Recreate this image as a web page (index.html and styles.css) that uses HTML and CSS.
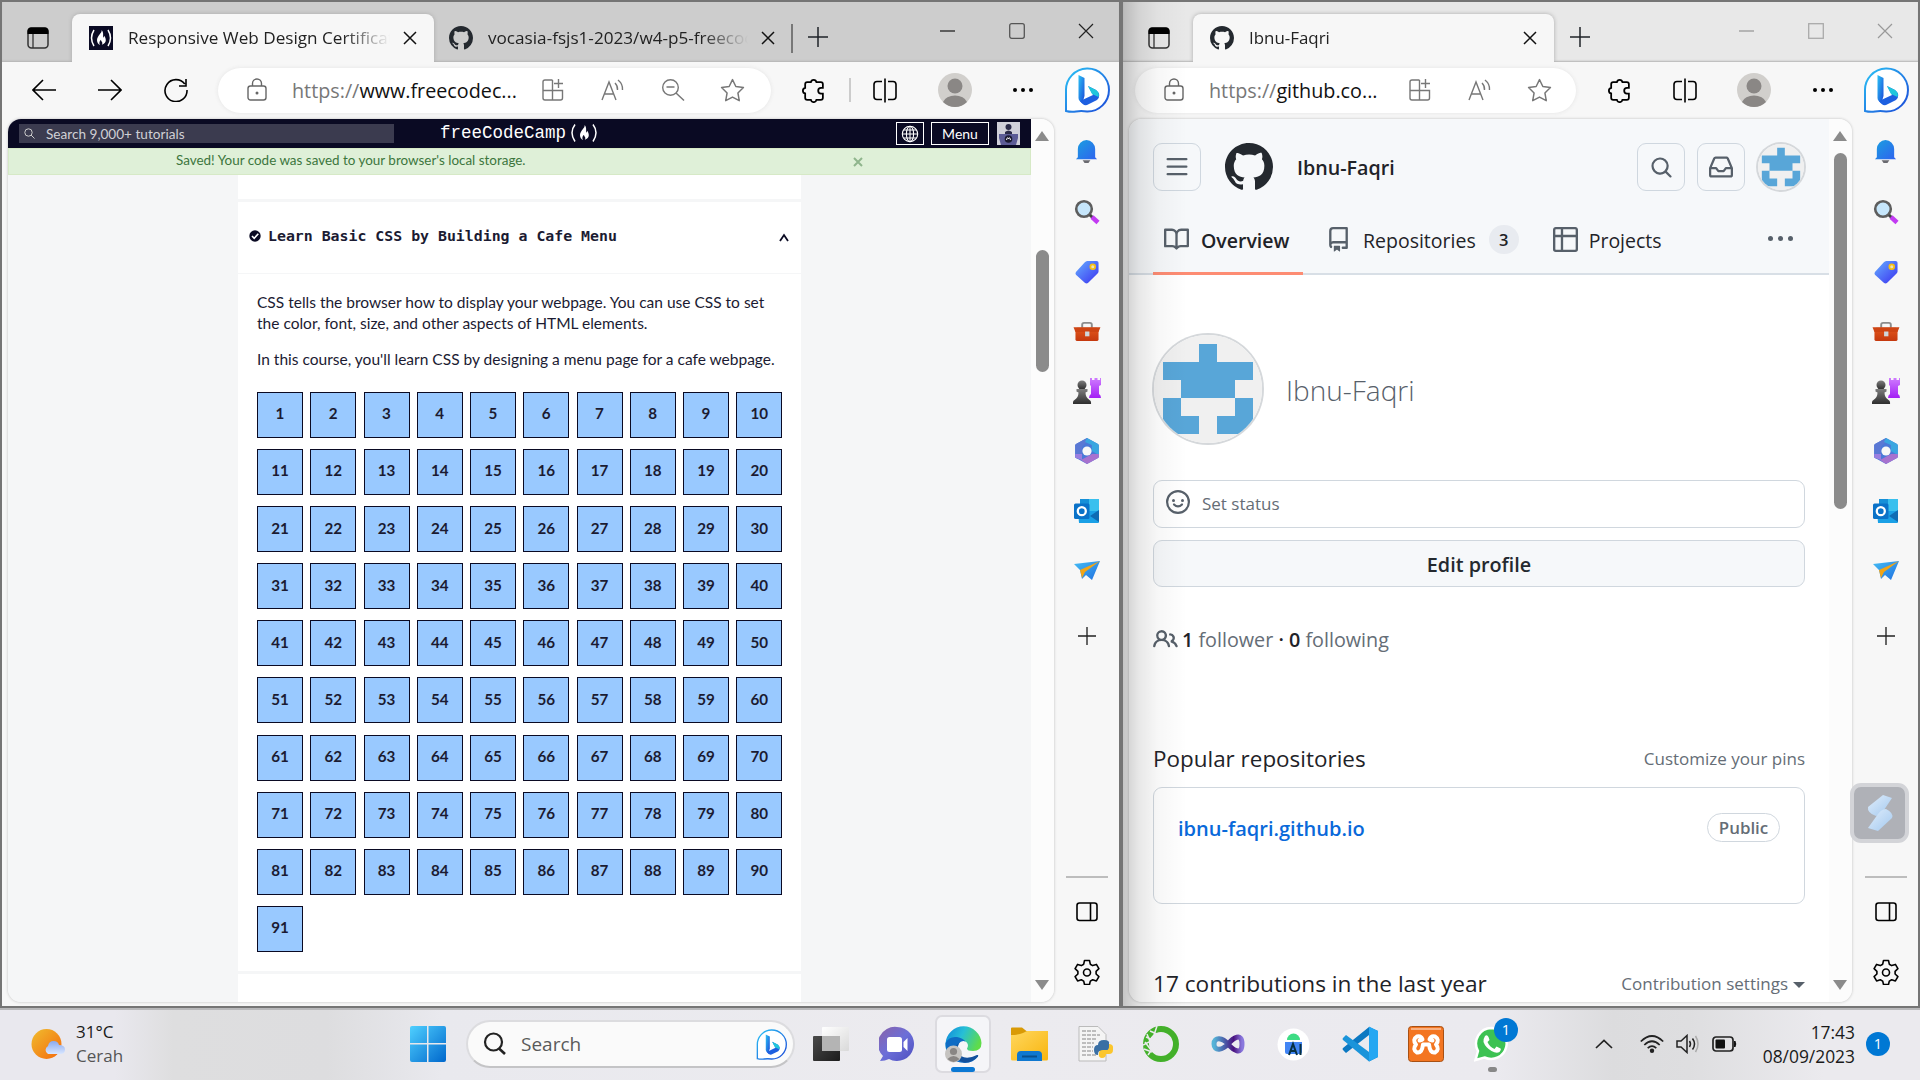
FILE: index.html
```html
<!DOCTYPE html>
<html lang="en">
<head>
<meta charset="utf-8">
<title>Desktop</title>
<link rel="stylesheet" href="styles.css">
</head>
<body>
<svg class="defs" width="0" height="0" aria-hidden="true">
<defs>
<linearGradient id="gBlue" x1="0" y1="0" x2="1" y2="1"><stop offset="0" stop-color="#2bc3f5"/><stop offset="1" stop-color="#1b48d8"/></linearGradient>
<linearGradient id="gBell" x1="0" y1="0" x2="1" y2="1"><stop offset="0" stop-color="#1aa0e0"/><stop offset="1" stop-color="#2f62ef"/></linearGradient>
<linearGradient id="gTag" x1="0" y1="0" x2="1" y2="1"><stop offset="0" stop-color="#66b0ff"/><stop offset="1" stop-color="#3a2ff0"/></linearGradient>
<linearGradient id="gWin" x1="0" y1="0" x2="1" y2="1"><stop offset="0" stop-color="#4fd0ff"/><stop offset="1" stop-color="#0067cc"/></linearGradient>
<linearGradient id="gSun" x1="0" y1="0" x2="1" y2="1"><stop offset="0" stop-color="#f0bd2e"/><stop offset="1" stop-color="#f4690d"/></linearGradient>
<linearGradient id="gCloud" x1="0" y1="0" x2="0" y2="1"><stop offset="0" stop-color="#8aaaf0"/><stop offset="1" stop-color="#d8e6ff"/></linearGradient>
<linearGradient id="gChat" x1="0" y1="0" x2="1" y2="1"><stop offset="0" stop-color="#8a62a8"/><stop offset=".5" stop-color="#6c6fd8"/><stop offset="1" stop-color="#4e4fc0"/></linearGradient>
<linearGradient id="gEdge" x1="0" y1="0" x2="1" y2=".4"><stop offset="0" stop-color="#0e86dc"/><stop offset=".5" stop-color="#27bfd6"/><stop offset="1" stop-color="#5fdc4a"/></linearGradient>
<linearGradient id="gFold" x1="0" y1="0" x2="1" y2="1"><stop offset="0" stop-color="#ffd75e"/><stop offset="1" stop-color="#f8b50e"/></linearGradient>
<linearGradient id="gVs" x1="0" y1="0" x2="1" y2="0"><stop offset="0" stop-color="#55b4d8"/><stop offset=".45" stop-color="#4b4ea0"/><stop offset=".7" stop-color="#4a1280"/><stop offset="1" stop-color="#8a78dd"/></linearGradient>
<linearGradient id="gDark" x1="0" y1="0" x2="1" y2="1"><stop offset="0" stop-color="#4a4a4a"/><stop offset="1" stop-color="#1c1c1c"/></linearGradient>
<linearGradient id="gGlass" x1="0" y1="0" x2="1" y2="1"><stop offset="0" stop-color="#ffffff"/><stop offset="1" stop-color="#d9d9d9"/></linearGradient>
<linearGradient id="gRook" x1="0" y1="0" x2="0" y2="1"><stop offset="0" stop-color="#cf7cff"/><stop offset="1" stop-color="#a320f5"/></linearGradient>
<linearGradient id="gPawn" x1="0" y1="0" x2="0" y2="1"><stop offset="0" stop-color="#7e7e7e"/><stop offset="1" stop-color="#2e2e2e"/></linearGradient>
<linearGradient id="gBox" x1="0" y1="0" x2="0" y2="1"><stop offset="0" stop-color="#e4571b"/><stop offset="1" stop-color="#c4380e"/></linearGradient>
<linearGradient id="gPlane" x1="0" y1="0" x2="1" y2="1"><stop offset="0" stop-color="#45bdf4"/><stop offset="1" stop-color="#1f6fe0"/></linearGradient>
<linearGradient id="gWidget" x1="0" y1="0" x2="1" y2="1"><stop offset="0" stop-color="#e0eefc"/><stop offset="1" stop-color="#a3c8ee"/></linearGradient>
</defs>

<symbol id="tabs" viewBox="0 0 22 22"><rect x="1" y="1" width="20" height="20" rx="3.5" fill="none" stroke="#333" stroke-width="1.5"/><path d="M.5 7V4a3.500 3.500 0 0 1 3.500-3.500h14A3.500 3.500 0 0 1 21.500 4v3z" fill="#000"/><path d="M6 7v14" stroke="#333" stroke-width="1.300"/></symbol>
<symbol id="x" viewBox="0 0 14 14"><path d="M1 1l12 12M13 1L1 13" fill="none" stroke="currentColor" stroke-width="1.500"/></symbol>
<symbol id="plus" viewBox="0 0 20 20"><path d="M10 0v20M0 10h20" stroke="currentColor" stroke-width="1.500"/></symbol>
<symbol id="back" viewBox="0 0 24 22"><path d="M24 11H1M11 1L1 11l10 10" fill="none" stroke="#000" stroke-width="1.600"/></symbol>
<symbol id="fwd" viewBox="0 0 24 22"><path d="M0 11h23M13 1l10 10-10 10" fill="none" stroke="#000" stroke-width="1.600"/></symbol>
<symbol id="reload" viewBox="0 0 24 24"><path d="M20.800 6A11 11 0 1 0 23 12M22 1v7h-7" fill="none" stroke="#000" stroke-width="1.600"/></symbol>
<symbol id="lock" viewBox="0 0 20 24"><rect x="1" y="8" width="18" height="14" rx="2.500" fill="none" stroke="#666" stroke-width="1.400"/><path d="M5.500 8V5.500a4.500 4.500 0 0 1 9 0V8" fill="none" stroke="#666" stroke-width="1.400"/><circle cx="10" cy="15" r="1.500" fill="#666"/></symbol>
<symbol id="apps" viewBox="0 0 24 24"><path d="M11.500 2H4a2 2 0 0 0-2 2v16a2 2 0 0 0 2 2h15.500a2 2 0 0 0 2-2v-7.500H2M11.500 2v20M17.500 1v9M13 5.500h9" fill="none" stroke="#777" stroke-width="1.400"/></symbol>
<symbol id="read" viewBox="0 0 24 24"><path d="M1 22L8 4l7 18M3.500 16h9M14 5q3 3 2.500 7M17 2q5 4 4.500 10" fill="none" stroke="#777" stroke-width="1.400"/></symbol>
<symbol id="zoomout" viewBox="0 0 24 24"><circle cx="9.500" cy="9.500" r="7.800" fill="none" stroke="#777" stroke-width="1.400"/><path d="M5.500 9h8M15 15l8 7.500" stroke="#777" stroke-width="1.500"/></symbol>
<symbol id="star" viewBox="0 0 24 24"><path d="M12 1.500l3.200 6.700 7.300 1-5.300 5.200 1.300 7.400L12 18.300l-6.500 3.500 1.300-7.400L1.500 9.200l7.300-1z" fill="none" stroke="#777" stroke-width="1.400" stroke-linejoin="round"/></symbol>
<symbol id="puzzle" viewBox="0 0 24 24"><path d="M6 4h3.500a2.700 2.700 0 0 1 5.300 0H19a2 2 0 0 1 2 2v3.500h-1.800a2.700 2.700 0 0 0 0 5.400H21V19a2 2 0 0 1-2 2h-4.200a2.700 2.700 0 0 1-5.300 0H6a2 2 0 0 1-2-2v-4.200a2.700 2.700 0 0 1 0-5.300V6a2 2 0 0 1 2-2z" fill="none" stroke="#000" stroke-width="1.700"/></symbol>
<symbol id="split" viewBox="0 0 24 24"><path d="M9 3H4a3 3 0 0 0-3 3v12a3 3 0 0 0 3 3h5M15 3h5a3 3 0 0 1 3 3v12a3 3 0 0 1-3 3h-5M12 0v24" fill="none" stroke="#000" stroke-width="1.600"/></symbol>
<symbol id="person" viewBox="0 0 34 34"><circle cx="17" cy="17" r="17" fill="#d1cfcc"/><circle cx="17" cy="13" r="7.500" fill="#8a8785"/><path d="M5 29a12.500 9 0 0 1 24 0a17 17 0 0 1-24 0z" fill="#8a8785"/></symbol>
<symbol id="dots" viewBox="0 0 20 4"><circle cx="2" cy="2" r="2"/><circle cx="10" cy="2" r="2"/><circle cx="18" cy="2" r="2"/></symbol>
<symbol id="bing" viewBox="0 0 46 46"><path d="M2 44V24A21.500 21.500 0 1 1 23 44.500q-6-.8-11 0T2 44z" fill="#fff" stroke="url(#gBlue)" stroke-width="2"/><path d="M14.500 8l6 3v18l-2 7q-4-2-4-5z" fill="url(#gBlue)"/><path d="M24 19l8 4q6 5 1 10l-10 5q-4 1-7-4l13-6z" fill="#1d5fe0"/><path d="M24 19l8 4q4 3 2.500 7L28 27z" fill="#20c6dc"/></symbol>
<symbol id="bell" viewBox="0 0 26 26"><path d="M4 19V10.500a9 9.500 0 0 1 18 0V19l2 2H2z" fill="url(#gBell)"/><path d="M9 22h8l-2 3h-4z" fill="#6a6a70"/></symbol>
<symbol id="lens" viewBox="0 0 26 26"><circle cx="10" cy="10" r="7.800" fill="#c6e6fb" stroke="#5e5e5e" stroke-width="2.600"/><path d="M16 16l3 3" stroke="#444" stroke-width="3"/><path d="M18 18l6 5.500" stroke="#c23bf2" stroke-width="4.500"/></symbol>
<symbol id="tag" viewBox="0 0 26 26"><path d="M13 2h10q2 0 2 2v9q0 1-1 2L14 25q-1.500 1-3 0L1.500 16.500q-1-1.500 0-3L11 3z" fill="url(#gTag)"/><circle cx="19" cy="8" r="2.500" fill="#e8e0c0" stroke="#f7bf12" stroke-width="1.800"/></symbol>
<symbol id="toolbox" viewBox="0 0 28 26"><path d="M9 9V6q0-2 2-2h6q2 0 2 2v3" fill="none" stroke="#8c8c8c" stroke-width="2"/><rect x="2" y="9" width="24" height="14" rx="2" fill="url(#gBox)"/><path d="M0 8.500h28l-2 5H2z" fill="#ce4413"/><rect x="12" y="13" width="4.500" height="5" fill="#cfd6dc"/></symbol>
<symbol id="chess" viewBox="0 0 28 28"><path d="M17 1h2v2h2.500V1h3v2H27V1h1v7l-2 1v8q2 1 2 4H16q0-3 2-4V9l-1-1z" fill="url(#gRook)"/><circle cx="9" cy="8" r="4.500" fill="url(#gPawn)"/><path d="M3.500 12h11v2.500l-2 1q0 5 4 7.500 2 1 1.500 4H0q-.5-3 1.500-4 4-2.500 4-7.500l-2-1z" fill="url(#gPawn)"/></symbol>
<symbol id="m365" viewBox="0 0 26 26"><path d="M13 0l11 6q.8.500.8 1.500v11q0 1-.8 1.500l-11 6-11-6q-.8-.5-.8-1.500v-11Q1.200 6.500 2 6z" fill="#4b78d8"/><path d="M13 0L2 6q-.8.500-.8 1.500v11q0 1 .8 1.500l6 2V9q2-3 4-4z" fill="#5a78d4"/><path d="M1.200 16v2.500q0 1 .8 1.500l6 2V16z" fill="#9a7ee0"/><path d="M13 0l11 6q.8.500.8 1.500V17l-7-4V7L11 4z" fill="#3aa6e0"/><path d="M24.800 16v2.500q0 1-.8 1.500l-11 6-6-4 11-6z" fill="#a772cf"/><circle cx="13" cy="13" r="4.600" fill="#f7f7f7"/></symbol>
<symbol id="outlook" viewBox="0 0 26 26"><rect x="6" y="1" width="19" height="13" fill="#39c0ee"/><rect x="6" y="1" width="9" height="9" fill="#1690d8"/><path d="M4 13h21v11q0 1-1 1H5z" fill="#1aa0e6"/><path d="M25 12v12l-9-6z" fill="#0f6cb4"/><rect x="0" y="5.500" width="15.500" height="15.500" rx="1.500" fill="#0a72c8"/><circle cx="7.800" cy="13.200" r="4" fill="none" stroke="#fff" stroke-width="2.300"/></symbol>
<symbol id="plane" viewBox="0 0 26 22"><path d="M0 4L26 1 18 20l-6-5-4 4-2-9z" fill="url(#gPlane)"/><path d="M26 1L6 10l2 8 3-6z" fill="#f2a516"/></symbol>
<symbol id="panel" viewBox="0 0 22 20"><rect x="1" y="1" width="20" height="17.500" rx="2.500" fill="none" stroke="#000" stroke-width="1.600"/><path d="M14.500 1v17.500" stroke="#000" stroke-width="1.600"/></symbol>
<symbol id="gear" viewBox="0 0 26 26"><path d="M10.500 1.500h5l.8 3.700 2.400 1.400 3.700-1.200 2.500 4.300-2.800 2.600v2.700l2.800 2.600-2.500 4.300-3.700-1.200-2.400 1.400-.8 3.400h-5l-.8-3.400-2.400-1.400-3.700 1.200-2.500-4.300L3.900 15v-2.700L1.100 9.700l2.500-4.300 3.700 1.200 2.400-1.400z" fill="none" stroke="#000" stroke-width="1.600" stroke-linejoin="round"/><circle cx="13" cy="13.500" r="3.500" fill="none" stroke="#000" stroke-width="1.600"/></symbol>
<symbol id="flame" viewBox="0 0 24 24"><path d="M13 0c1 4-7 9-7 15.500 0 3.500 2 6 4.500 7-2-3.500-.5-6 1.500-8 0 3 2 2.500 2 5 0 1-.3 2-.8 2.700 3.500-.7 6-3.500 6-6.700 0-3-1-5-2.500-7-.3 1.500-.8 2.500-1.700 3C15.500 7 15.500 2.500 13 0z" fill="currentColor"/></symbol>
<symbol id="globe" viewBox="0 0 18 18"><g fill="none" stroke="#fff" stroke-width="1.100"><circle cx="9" cy="9" r="7.700"/><ellipse cx="9" cy="9" rx="3.600" ry="7.700"/><path d="M1 9h16M9 1v16M2.500 5h13M2.500 13h13"/></g></symbol>
<symbol id="github" viewBox="0 0 16 16"><path d="M8 0c4.420 0 8 3.580 8 8a8.013 8.013 0 0 1-5.450 7.590c-.4.080-.55-.17-.55-.38 0-.27.010-1.130.010-2.200 0-.75-.25-1.230-.54-1.480 1.780-.2 3.650-.88 3.650-3.950 0-.88-.31-1.590-.82-2.150.080-.2.360-1.020-.080-2.120 0 0-.67-.22-2.200.82-.64-.18-1.320-.27-2-.27-.68 0-1.360.090-2 .27-1.530-1.030-2.200-.82-2.200-.82-.44 1.100-.16 1.920-.080 2.120-.51.560-.82 1.280-.82 2.150 0 3.060 1.860 3.750 3.640 3.950-.23.200-.44.550-.51 1.070-.46.210-1.610.550-2.330-.66-.15-.24-.6-.83-1.230-.82-.67.010-.27.380.010.530.340.190.730.900.820 1.130.160.450.680 1.310 2.690.940 0 .67.010 1.300.010 1.490 0 .21-.15.450-.55.380A7.995 7.995 0 0 1 0 8c0-4.420 3.580-8 8-8Z" fill="#24292f"/></symbol>
<symbol id="identicon" viewBox="0 0 420 420"><path fill="#f0f0f0" d="M0 0h420v420H0z"/><path fill="#58a6d8" d="M175 35h70v70h140v70h-70v70H105v-70H35v-70h140zM35 245h70v70h70v70H35zM315 245h70v140H245v-70h70z"/></symbol>
</svg>

<div class="desktop">
<div class="windows">

<!-- freeCodeCamp window -->
<section class="window window-left">
  <header class="tabstrip">
    <div class="cell"><svg width="22" height="22"><use href="#tabs"/></svg></div>
    <div class="tab active">
      <svg class="favicon" width="24" height="24"><rect width="24" height="24" fill="#0a0a23"/><path d="M5 4q-5 8 0 16M19 4q5 8 0 16" fill="none" stroke="#fff" stroke-width="1.500"/><use href="#flame" x="4" y="4" width="16" height="16" color="#fff"/></svg>
      <span class="tab-title">Responsive Web Design Certificat</span>
      <svg class="tab-close" width="14" height="14"><use href="#x"/></svg>
    </div>
    <div class="tab">
      <svg class="favicon" width="24" height="24"><use href="#github"/></svg>
      <span class="tab-title">vocasia-fsjs1-2023/w4-p5-freecoc</span>
      <svg class="tab-close" width="14" height="14"><use href="#x"/></svg>
    </div>
    <div class="cell newtab"><svg width="20" height="20"><use href="#plus"/></svg></div>
    <div class="caption">
      <svg width="16" height="16"><path d="M0 8h15" stroke="#222" stroke-width="1.300"/></svg>
      <svg width="16" height="16"><rect x=".7" y=".7" width="14.600" height="14.600" rx="2" fill="none" stroke="#555" stroke-width="1.300"/></svg>
      <svg width="16" height="16"><path d="M1 1l14 14M15 1L1 15" stroke="#222" stroke-width="1.200"/></svg>
    </div>
  </header>
  <div class="toolbar">
    <nav class="navkeys">
      <svg width="24" height="22"><use href="#back"/></svg>
      <svg width="24" height="22"><use href="#fwd"/></svg>
      <svg width="24" height="24"><use href="#reload"/></svg>
    </nav>
    <div class="address">
      <svg width="20" height="24"><use href="#lock"/></svg>
      <span class="url"><i>https://</i>www.freecodec...</span>
      <svg width="24" height="24"><use href="#apps"/></svg>
      <svg width="24" height="24"><use href="#read"/></svg>
      <svg width="24" height="24"><use href="#zoomout"/></svg>
      <svg width="25" height="25"><use href="#star"/></svg>
    </div>
    <div class="tools split-line">
      <svg width="25" height="25"><use href="#puzzle"/></svg>
      <svg width="24" height="25"><use href="#split"/></svg>
      <svg width="34" height="34"><use href="#person"/></svg>
      <svg width="20" height="4"><use href="#dots"/></svg>
      <svg width="46" height="46"><use href="#bing"/></svg>
    </div>
  </div>
  <div class="body">
    <div class="viewport">
      <main class="fcc">
        <div class="fcc-nav">
          <div class="fcc-search"><svg width="11" height="11" viewBox="0 0 11 11"><circle cx="4.500" cy="4.500" r="3.700" fill="none" stroke="#ccc"/><path d="M7 7l3.500 3.500" stroke="#ccc"/></svg><span>Search 9,000+ tutorials</span></div>
          <div class="fcc-logo"><span>freeCodeCamp</span><svg width="30" height="20" viewBox="0 0 30 20"><path d="M6 1.500q-6 8 0 17M24 1.500q6 8 0 17" fill="none" stroke="#fff" stroke-width="1.500"/><use href="#flame" x="6" y="2" width="18" height="16" color="#fff"/></svg></div>
          <div class="fcc-actions">
            <div class="fcc-btn lang"><svg width="18" height="18"><use href="#globe"/></svg></div>
            <div class="fcc-btn menu">Menu</div>
            <svg width="23" height="23" viewBox="0 0 23 23"><rect width="23" height="23" fill="#d0d0d9"/><circle cx="11.500" cy="5" r="3" fill="#2a2a48"/><path d="M8 10q3.500-3 7 0v3H8z" fill="#2a2a48"/><path d="M2 12h19v4l-2 7H4l-2-7z" fill="#5c5c96"/><circle cx="11.500" cy="17" r="3.800" fill="#1b1b32"/><path d="M9.500 18q1-4 2-1 1-3 2 1" fill="none" stroke="#fff"/></svg>
          </div>
        </div>
        <div class="flash"><span>Saved! Your code was saved to your browser's local storage.</span><svg width="10" height="10" viewBox="0 0 10 10"><path d="M1 1l8 8M9 1L1 9" stroke="currentColor" stroke-width="2"/></svg></div>
        <div class="column">
          <div class="prev-block"></div>
          <div class="block-head">
            <svg width="12" height="12" viewBox="0 0 12 12"><circle cx="6" cy="6" r="5.700" fill="#0a0a23"/><path d="M3 6l2.200 2.300L9.300 3.800" fill="none" stroke="#fff" stroke-width="1.600"/></svg>
            <h3>Learn Basic CSS by Building a Cafe Menu</h3>
            <svg width="10" height="9" viewBox="0 0 10 9"><path d="M1 8l4-6 4 6" fill="none" stroke="#0a0a23" stroke-width="1.800"/></svg>
          </div>
          <div class="block-body">
            <p><span>CSS tells the browser how to display your webpage. You can use CSS to set</span><br><span>the color, font, size, and other aspects of HTML elements.</span></p>
            <p><span>In this course, you'll learn CSS by designing a menu page for a cafe webpage.</span></p>
            <div class="steps">
<a>1</a><a>2</a><a>3</a><a>4</a><a>5</a><a>6</a><a>7</a><a>8</a><a>9</a><a>10</a>
<a>11</a><a>12</a><a>13</a><a>14</a><a>15</a><a>16</a><a>17</a><a>18</a><a>19</a><a>20</a>
<a>21</a><a>22</a><a>23</a><a>24</a><a>25</a><a>26</a><a>27</a><a>28</a><a>29</a><a>30</a>
<a>31</a><a>32</a><a>33</a><a>34</a><a>35</a><a>36</a><a>37</a><a>38</a><a>39</a><a>40</a>
<a>41</a><a>42</a><a>43</a><a>44</a><a>45</a><a>46</a><a>47</a><a>48</a><a>49</a><a>50</a>
<a>51</a><a>52</a><a>53</a><a>54</a><a>55</a><a>56</a><a>57</a><a>58</a><a>59</a><a>60</a>
<a>61</a><a>62</a><a>63</a><a>64</a><a>65</a><a>66</a><a>67</a><a>68</a><a>69</a><a>70</a>
<a>71</a><a>72</a><a>73</a><a>74</a><a>75</a><a>76</a><a>77</a><a>78</a><a>79</a><a>80</a>
<a>81</a><a>82</a><a>83</a><a>84</a><a>85</a><a>86</a><a>87</a><a>88</a><a>89</a><a>90</a>
<a>91</a>
            </div>
          </div>
          <div class="next-block"></div>
        </div>
      </main>
      <div class="scrollbar"><b class="up"></b><b class="thumb"></b><b class="down"></b></div>
    </div>
    <aside class="sidebar">
      <div><svg width="25" height="25"><use href="#bell"/></svg></div>
      <div><svg width="26" height="26"><use href="#lens"/></svg></div>
      <div><svg width="26" height="25"><use href="#tag"/></svg></div>
      <div><svg width="28" height="25"><use href="#toolbox"/></svg></div>
      <div><svg width="28" height="28"><use href="#chess"/></svg></div>
      <div><svg width="26" height="26"><use href="#m365"/></svg></div>
      <div><svg width="26" height="26"><use href="#outlook"/></svg></div>
      <div><svg width="26" height="22"><use href="#plane"/></svg></div>
      <div class="add"><svg width="18" height="18"><use href="#plus"/></svg></div>
      <hr>
      <div><svg width="22" height="20"><use href="#panel"/></svg></div>
      <div><svg width="26" height="26"><use href="#gear"/></svg></div>
    </aside>
  </div>
</section>

<!-- GitHub window -->
<section class="window window-right">
  <header class="tabstrip">
    <div class="cell"><svg width="22" height="22"><use href="#tabs"/></svg></div>
    <div class="tab active">
      <svg class="favicon" width="24" height="24"><use href="#github"/></svg>
      <span class="tab-title">Ibnu-Faqri</span>
      <svg class="tab-close" width="14" height="14"><use href="#x"/></svg>
    </div>
    <div class="cell newtab"><svg width="20" height="20"><use href="#plus"/></svg></div>
    <div class="caption">
      <svg width="16" height="16"><path d="M0 8h15" stroke="#999" stroke-width="1.300"/></svg>
      <svg width="16" height="16"><rect x=".7" y=".7" width="14.600" height="14.600" fill="none" stroke="#aaa" stroke-width="1.300"/></svg>
      <svg width="16" height="16"><path d="M1 1l14 14M15 1L1 15" stroke="#999" stroke-width="1.200"/></svg>
    </div>
  </header>
  <div class="toolbar">
    <div class="address">
      <svg width="20" height="24"><use href="#lock"/></svg>
      <span class="url"><i>https://</i>github.co...</span>
      <svg width="24" height="24"><use href="#apps"/></svg>
      <svg width="24" height="24"><use href="#read"/></svg>
      <svg width="25" height="25"><use href="#star"/></svg>
    </div>
    <div class="tools">
      <svg width="25" height="25"><use href="#puzzle"/></svg>
      <svg width="24" height="25"><use href="#split"/></svg>
      <svg width="34" height="34"><use href="#person"/></svg>
      <svg width="20" height="4"><use href="#dots"/></svg>
      <svg width="46" height="46"><use href="#bing"/></svg>
    </div>
  </div>
  <div class="body">
    <div class="viewport">
      <main class="gh">
        <div class="gh-header">
          <div class="gh-top">
            <div class="gh-btn"><svg width="24" height="24" viewBox="0 0 16 16"><path d="M1 2.750A.75.750 0 0 1 1.750 2h12.500a.75.750 0 0 1 0 1.500H1.750A.75.750 0 0 1 1 2.750Zm0 5A.75.750 0 0 1 1.750 7h12.500a.75.750 0 0 1 0 1.500H1.750A.75.750 0 0 1 1 7.750ZM1.750 12h12.500a.75.750 0 0 1 0 1.500H1.750a.75.750 0 0 1 0-1.500Z"/></svg></div>
            <svg class="gh-mark" width="48" height="48"><use href="#github"/></svg>
            <strong class="gh-user">Ibnu-Faqri</strong>
            <div class="gh-btn"><svg width="23" height="23" viewBox="0 0 16 16"><path d="M10.680 11.740a6 6 0 0 1-7.922-8.982 6 6 0 0 1 8.982 7.922l3.040 3.040a.749.749 0 0 1-.326 1.275.749.749 0 0 1-.734-.215ZM11.500 7a4.499 4.499 0 1 0-8.997 0A4.499 4.499 0 0 0 11.500 7Z"/></svg></div>
            <div class="gh-btn"><svg width="24" height="24" viewBox="0 0 16 16"><path d="M2.800 2.060A1.750 1.750 0 0 1 4.410 1h7.180c.7 0 1.333.417 1.610 1.060l2.740 6.395c.040.093.060.194.060.295v4.500A1.750 1.750 0 0 1 14.250 15H1.750A1.750 1.750 0 0 1 0 13.250v-4.500c0-.101.020-.202.060-.295Zm1.610.44a.25.250 0 0 0-.23.152L1.887 8H4.750a.75.750 0 0 1 .6.3L6.625 10h2.750l1.275-1.700a.75.750 0 0 1 .6-.3h2.863L11.820 2.652a.25.250 0 0 0-.23-.152Zm10.090 7h-2.875l-1.275 1.700a.75.750 0 0 1-.6.300h-3.500a.75.750 0 0 1-.6-.3L4.375 9.500H1.500v3.750c0 .138.112.250.250.250h12.500a.25.250 0 0 0 .25-.25Z"/></svg></div>
            <svg class="gh-ava" width="46" height="46"><use href="#identicon"/></svg>
          </div>
          <div class="gh-tabs">
            <div class="gh-tab on"><svg width="25" height="25" viewBox="0 0 16 16"><path d="M0 1.750A.75.750 0 0 1 .75 1h4.253c1.227 0 2.317.59 3 1.501A3.743 3.743 0 0 1 11.006 1h4.245a.75.750 0 0 1 .75.750v10.500a.75.750 0 0 1-.75.750h-4.507a2.250 2.250 0 0 0-1.591.659l-.622.621a.75.750 0 0 1-1.060 0l-.622-.621A2.250 2.250 0 0 0 5.258 13H.75a.75.750 0 0 1-.75-.75Zm7.251 10.324.004-5.073-.002-2.253A2.250 2.250 0 0 0 5.003 2.500H1.500v9h3.757a3.750 3.750 0 0 1 1.994.574ZM8.755 4.750l-.004 7.322a3.752 3.752 0 0 1 1.992-.572H14.500v-9h-3.495a2.250 2.250 0 0 0-2.250 2.250Z"/></svg><span>Overview</span></div>
            <div class="gh-tab"><svg width="25" height="25" viewBox="0 0 16 16"><path d="M2 2.500A2.500 2.500 0 0 1 4.500 0h8.750a.75.750 0 0 1 .75.750v12.500a.75.750 0 0 1-.75.750h-2.500a.75.750 0 0 1 0-1.500h1.750v-2h-8a1 1 0 0 0-.714 1.700.75.750 0 1 1-1.072 1.050A2.495 2.495 0 0 1 2 11.500Zm10.500-1h-8a1 1 0 0 0-1 1v6.708A2.486 2.486 0 0 1 4.500 9h8ZM5 12.250a.25.250 0 0 1 .25-.25h3.500a.25.250 0 0 1 .25.250v3.250a.25.250 0 0 1-.4.200l-1.450-1.087a.249.249 0 0 0-.3 0L5.400 15.700a.25.250 0 0 1-.4-.2Z"/></svg><span>Repositories</span><em>3</em></div>
            <div class="gh-tab"><svg width="25" height="25" viewBox="0 0 16 16"><path d="M0 1.750C0 .784.784 0 1.750 0h12.500C15.216 0 16 .784 16 1.750v12.500A1.750 1.750 0 0 1 14.250 16H1.750A1.750 1.750 0 0 1 0 14.250ZM6.500 6.500v8h7.750a.25.250 0 0 0 .25-.25V6.500Zm8-1.500V1.750a.25.250 0 0 0-.25-.25H6.500V5Zm-13 1.500v7.750c0 .138.112.250.250.250H5v-8ZM5 5V1.500H1.750a.25.250 0 0 0-.25.250V5Z"/></svg><span>Projects</span></div>
            <svg class="gh-more" width="25" height="5"><use href="#dots"/></svg>
          </div>
        </div>
        <div class="gh-profile">
          <div class="gh-id"><svg class="big-ava" width="108" height="108"><use href="#identicon"/></svg><h1>Ibnu-Faqri</h1></div>
          <div class="status"><svg width="24" height="24" viewBox="0 0 24 24"><circle cx="12" cy="12" r="10.900" fill="none" stroke="#57606a" stroke-width="2.200"/><circle cx="7.500" cy="10.500" r="1.500"/><circle cx="16.500" cy="10.500" r="1.500"/><path d="M8 14.500q4 4 8 0" fill="none" stroke="#57606a" stroke-width="2.200" stroke-linecap="round"/></svg><span>Set status</span></div>
          <div class="edit">Edit profile</div>
          <div class="follow"><svg width="25" height="25" viewBox="0 0 16 16"><path d="M2 5.500a3.500 3.500 0 1 1 5.898 2.549 5.508 5.508 0 0 1 3.034 4.084.75.750 0 1 1-1.482.235 4 4 0 0 0-7.900 0 .75.750 0 0 1-1.482-.236A5.507 5.507 0 0 1 3.102 8.050 3.493 3.493 0 0 1 2 5.500ZM11 4a3.001 3.001 0 0 1 2.220 5.018 5.010 5.010 0 0 1 2.560 3.012.749.749 0 0 1-.885.954.752.752 0 0 1-.549-.514 3.507 3.507 0 0 0-2.522-2.372.75.750 0 0 1-.574-.73v-.352a.75.750 0 0 1 .416-.672A1.500 1.500 0 0 0 11 5.500.750.750 0 0 1 11 4Zm-5.500-.5a2 2 0 1 0-.001 3.999A2 2 0 0 0 5.500 3.500Z"/></svg><span><b>1</b> follower <b>·</b> <b>0</b> following</span></div>
          <div class="row-head"><h2>Popular repositories</h2><small>Customize your pins</small></div>
          <div class="repo"><a>ibnu-faqri.github.io</a><span class="public">Public</span></div>
          <div class="row-head contrib"><h2>17 contributions in the last year</h2><small>Contribution settings</small><i class="caret"></i></div>
        </div>
      </main>
      <div class="scrollbar"><b class="up"></b><b class="thumb"></b><b class="down"></b></div>
    </div>
    <aside class="sidebar">
      <div><svg width="25" height="25"><use href="#bell"/></svg></div>
      <div><svg width="26" height="26"><use href="#lens"/></svg></div>
      <div><svg width="26" height="25"><use href="#tag"/></svg></div>
      <div><svg width="28" height="25"><use href="#toolbox"/></svg></div>
      <div><svg width="28" height="28"><use href="#chess"/></svg></div>
      <div><svg width="26" height="26"><use href="#m365"/></svg></div>
      <div><svg width="26" height="26"><use href="#outlook"/></svg></div>
      <div><svg width="26" height="22"><use href="#plane"/></svg></div>
      <div class="add"><svg width="18" height="18"><use href="#plus"/></svg></div>
      <hr>
      <div><svg width="22" height="20"><use href="#panel"/></svg></div>
      <div><svg width="26" height="26"><use href="#gear"/></svg></div>
    </aside>
  </div>
  <div class="edge-shadow"></div>
</section>
</div>

<footer class="taskbar">
  <div class="weather">
    <svg width="36" height="32" viewBox="0 0 36 32"><circle cx="15.500" cy="16" r="15" fill="url(#gSun)"/><path d="M17 26a4.500 4.500 0 0 1 0-8q1-5 5.500-5t5.500 4q6 0 6 4.500t-5 4.500z" fill="url(#gCloud)"/></svg>
    <div><span>31°C</span><span class="sky">Cerah</span></div>
  </div>
  <div class="apps">
    <svg class="start" width="36" height="36" viewBox="0 0 36 36"><path d="M2 0h15v17H0V2q0-2 2-2zM18.500 0H34q2 0 2 2v15H18.500zM0 18.500h17V36H2q-2 0-2-2zM18.500 18.500H36V34q0 2-2 2H18.500z" fill="url(#gWin)"/></svg>
    <div class="search">
      <svg width="24" height="24" viewBox="0 0 24 24"><circle cx="10.500" cy="10" r="8.500" fill="none" stroke="#222" stroke-width="2.200"/><path d="M16 16.500l6 5.500" stroke="#222" stroke-width="2.600"/></svg>
      <span>Search</span>
      <svg width="31" height="31"><use href="#bing"/></svg>
    </div>
    <div class="app"><svg width="36" height="36" viewBox="0 0 36 36"><rect y="10" width="27" height="25" rx="1" fill="url(#gDark)"/><rect x="9" y="1" width="27" height="24" rx="1" fill="url(#gGlass)"/><path d="M9 10h18v15H9z" fill="#b4b4b4"/></svg></div>
    <div class="app"><svg width="36" height="36" viewBox="0 0 36 36"><path d="M18 1a17 17 0 1 1-8 32q-4 2-9 2l3-5A17 17 0 0 1 18 1z" fill="url(#gChat)"/><rect x="8" y="11" width="15" height="15" rx="2.500" fill="#fff"/><path d="M24.500 16l4-4v13l-4-4z" fill="#fff"/></svg></div>
    <div class="app current"><svg width="37" height="37" viewBox="0 0 37 37"><path d="M.6 17A18 18 0 0 1 36.500 17q0 8-8.500 8-6 0-6-2.500c2-2.500 1-7.500-4-7.500q-9 0-9 11L5 30Q-.5 24 .6 17z" fill="url(#gEdge)"/><path d="M.5 17Q4 10 12 11q6 1 8.500 4.500-4-1.500-6.500 2-3 6 1 11.500 4 5 12 3 3-1 5-2.500 1.500-.5 1 1-4.500 6-13 6.500Q1 36 .5 17z" fill="#0f6cc4"/><path d="M14 17q-5 7 2 13 6 4 16-1 2-.5 1 1.500-6 6.500-14 6-12-4-9-14 1-4 4-5.500z" fill="#12509c"/><circle cx="8.500" cy="28" r="8.500" fill="#c5c3c0"/><circle cx="8.500" cy="25.500" r="3.600" fill="#898684"/><path d="M2.500 33q6-6 12 0-6 6-12 0z" fill="#898684"/></svg><i class="run"></i></div>
    <div class="app"><svg width="37" height="34" viewBox="0 0 37 34"><path d="M0 1.500Q0 .5 1 .5h10l5 4H0z M0 4h16v6H0z" fill="#d99a06"/><path d="M0 8q8 0 12-2l4-2h21v28q0 1.500-1.500 1.500h-34Q0 33.500 0 32z" fill="url(#gFold)"/><path d="M6 34v-6q0-4 4-4h17q4 0 4 4v6z" fill="#0f78d0"/><path d="M11 29.500h15" stroke="#08508f" stroke-width="2"/></svg></div>
    <div class="app"><svg width="36" height="36" viewBox="0 0 36 36"><path d="M2 .5h19l8 8V35H2z" fill="#f4f4f4" stroke="#bbb"/><path d="M5 5h14M5 9h18M5 13h14M5 17h12M5 21h11M5 25h11M5 29h14" stroke="#aaa" stroke-width="1.500" stroke-dasharray="4 1"/><path d="M21 19q0-5 6-5t5 4v4q0 3-4 3h-5q-2 0-2 4-4 0-4-5t4-5z" fill="#3a6fa4"/><path d="M32 18q5 0 4 6 0 4-4 4h-3q0 4-4 4-4-.5-3-5 0-3 4-3h4q2 0 2-4z" fill="#fbc62d"/></svg></div>
    <div class="app"><svg width="36" height="36" viewBox="0 0 36 36"><circle cx="18" cy="18" r="15" fill="none" stroke="#43b02a" stroke-width="6"/><path d="M14 0l-3 9M7 5l7 3M3 11l7 3M0 19l8-4M1 23l8 3M5 29l5-7M4 8l4 10M2 16l6 8" stroke="#ebeaee" stroke-width="1.500"/></svg></div>
    <div class="app"><svg width="34" height="22" viewBox="0 0 34 22"><path d="M17 11C12 5 3 3 3 11s9 6 14 0S31 -1 31 11s-9 6 -14 0z" fill="none" stroke="url(#gVs)" stroke-width="5"/></svg></div>
    <div class="app"><svg width="33" height="33" viewBox="0 0 33 33"><circle cx="16.500" cy="16.500" r="16" fill="#fff"/><path d="M8 14h17v10q0 2-2 2H10q-2 0-2-2z" fill="#4285f4"/><path d="M10 12a6 6 0 0 1 13 0z" fill="#3ddc84"/><path d="M12 27l4-11 4 11M13 23h6M23.500 16v11" fill="none" stroke="#073042" stroke-width="2"/></svg></div>
    <div class="app"><svg width="36" height="36" viewBox="0 0 36 36"><path d="M27 1l9 4v26l-9 4.500V9L4 27l-3-3q-1-1 0-2z" fill="#0b78c2"/><path d="M4 9L27 26v9.500L1 14q-1-1 0-2z" fill="#1a94da"/><path d="M27 .5l9 4.500v26l-9 4.500z" fill="#25a7f2"/></svg></div>
    <div class="app"><svg width="36" height="36" viewBox="0 0 36 36"><rect x=".5" y=".5" width="35" height="35" rx="3" fill="#f37521" stroke="#a85013"/><path d="M3 3h30" stroke="#f9b080" stroke-width="2"/><path d="M15 18.500h6M15 18.500q-1 9-6 8-5-3-1-8-4-5 1-8 4-1 5.500 3l-3 1M21 18.500q1 9 6 8 5-3 1-8 4-5-1-8-4-1-5.500 3l3 1" fill="none" stroke="#fff" stroke-width="4" stroke-linejoin="round" stroke-linecap="round"/></svg></div>
    <div class="app whatsapp"><svg width="36" height="36" viewBox="0 0 36 36"><path d="M17.500 2a15.500 15.500 0 1 1-7 29.500L1.500 34l2.500-9A15.500 15.500 0 0 1 17.500 2z" fill="#3dc253" stroke="#fff" stroke-width="2.500"/><path d="M11 10q2-2 3.500 1l1 3-2 2q2 5 7 7l2-2.500 4 2q1 1-1 3.500-3 2-8-1-6-3.500-8-9 0-4 1.500-6z" fill="#fff"/></svg><b class="count">1</b><i class="run idle"></i></div>
  </div>
  <div class="tray">
    <svg width="18" height="10" viewBox="0 0 18 10"><path d="M1 9l8-7.500L17 9" fill="none" stroke="#222" stroke-width="1.700"/></svg>
    <svg class="wifi" width="24" height="18" viewBox="0 0 24 18"><g fill="none" stroke="#222" stroke-width="1.700"><path d="M.8 6.500q11.200-11 22.400 0M4.300 10q7.700-7.500 15.400 0M7.700 13.200q4.300-4 8.600 0"/></g><circle cx="12" cy="15.800" r="2.200" fill="#222"/></svg>
    <svg class="vol" width="24" height="20" viewBox="0 0 24 20"><path d="M1 7h4l6-5.500v17L5 13H1z" fill="none" stroke="#222" stroke-width="1.500"/><path d="M13.500 7q2 3 0 6M16.500 4.500q4 5.500 0 11" fill="none" stroke="#222" stroke-width="1.500"/><path d="M19.500 2q5 8 0 16" fill="none" stroke="#aaa" stroke-width="1.500"/></svg>
    <svg class="bat" width="25" height="16" viewBox="0 0 25 16"><rect x="1" y="1" width="20" height="14" rx="3" fill="none" stroke="#222" stroke-width="1.700"/><rect x="3.500" y="3.500" width="9.500" height="9" rx="1" fill="#111"/><path d="M22 5h1.500q1.500 3 0 6H22z" fill="#111"/></svg>
    <div class="clock"><span>17:43</span><span>08/09/2023</span></div>
    <b class="note">1</b>
  </div>
</footer>

<div class="widget"><svg width="30" height="36" viewBox="0 0 30 36"><path d="M18 0l9 3-10 15q-3 3-6 3-9-3-8-9z" fill="url(#gWidget)"/><path d="M13 36l-10-3 10-14q4-5 8-5 8 4 6 9z" fill="url(#gWidget)"/></svg></div>
</div>
</body>
</html>
```
FILE: styles.css
```css
* { box-sizing: border-box; }
body { margin: 0; overflow: hidden; font-family: "Open Sans", "Noto Sans", sans-serif; color: #1f2328; }
svg { display: block; flex: none; }
.defs { position: absolute; }
h1, h2, h3, p { margin: 0; font-weight: 400; }
span, strong, small, h1, h2, h3, a { white-space: nowrap; }

.desktop { position: relative; width: 1920px; height: 1080px; display: flex; flex-direction: column; }
.windows { display: flex; height: 1010px; background: #757575; border-bottom: 2px solid #b8b8ba; }

/* browser windows */
.window { position: relative; display: flex; flex-direction: column; height: 1008px; border: 2px solid #757575; background: #f7f7f7; }
.window-left { width: 1121px; }
.window-right { width: 799px; border-left-width: 2px; }

.tabstrip { display: grid; height: 60px; flex: none; background: #cdcdcd; box-shadow: inset 0 -2px 2px -1px #b4b4b4; }
.window-left .tabstrip { grid-template-columns: 70px 362px 357px 53px 1fr; }
.window-right .tabstrip { grid-template-columns: 70px 361px 51px 1fr; background: #e8e8e8; }
.cell { display: flex; align-items: center; justify-content: center; padding: 11px 0 0 2px; }
.newtab { padding: 10px 0 0; }
.window-left .newtab { background: linear-gradient(#777, #777) 0 22px / 2px 29px no-repeat; }
.tab { display: flex; align-items: center; padding: 11px 16px 0 15px; }
.tab.active { margin-top: 12px; padding: 0 17px 1px; background: #f7f7f7; border-radius: 8px 8px 0 0; box-shadow: 0 0 4px #aaa; clip-path: inset(-4px -4px 0 -4px); }
.tab-title { flex: 1; margin-left: 15px; overflow: hidden; font-size: 17.150px; line-height: 26px; color: #222; -webkit-mask-image: linear-gradient(90deg, #000 calc(100% - 50px), transparent calc(100% - 3px)); mask-image: linear-gradient(90deg, #000 calc(100% - 50px), transparent calc(100% - 3px)); }
.window-right .tab-title { font-size: 16.900px; }
.tab-close { margin-left: 10px; color: #111; }
.caption { display: flex; justify-content: flex-end; gap: 53px; padding: 21px 25px 0 0; }

.toolbar { display: flex; align-items: center; height: 57px; flex: none; padding-bottom: 1px; }
.navkeys { display: grid; grid-template-columns: repeat(3, 66px); place-items: center; margin: 0 9px; }
.address { display: grid; align-items: center; justify-items: center; height: 45px; border-radius: 23px; background: #fff; box-shadow: 0 0 4px #e4e4e4; }
.window-left .address { width: 553px; grid-template-columns: 74px 235px 51px 69px 52px 67px; }
.window-right .address { width: 441px; margin-left: 12px; grid-template-columns: 74px 185px 51px 69px 50px; }
.address svg:first-child { margin-left: 4px; }
.url { justify-self: start; font-size: 19.750px; color: #111; }
.url i { font-style: normal; color: #777; }
.tools { display: grid; grid-template-columns: 79px 69px 72px 64px 63px; place-items: center; }
.tools svg:first-child { margin-left: 5px; }
.split-line { background: linear-gradient(#ccc, #ccc) 78px 50% / 2px 24px no-repeat; }
.window-right .tools { grid-template-columns: 75px 67px 72px 65px 62px; }
.window-right .tools svg:first-child { margin-left: 12px; }

.body { display: flex; flex: 1; min-height: 0; padding: 0 0 4px 6px; }
.viewport { display: flex; width: 1046px; border-radius: 13px; overflow: hidden; box-shadow: 0 0 3px #bbb; }
.window-right .viewport { width: 723px; }
.scrollbar { width: 23px; flex: none; display: flex; flex-direction: column; align-items: center; background: #fcfcfc; }
.window-left .scrollbar { padding-right: 1px; }
.window-right .scrollbar { padding-right: 1px; }
.up, .down { width: 0; height: 0; border: 7px solid transparent; border-top: 0; border-bottom: 10px solid #8b8b8b; margin-top: 12px; }
.down { border: 7px solid transparent; border-bottom: 0; border-top: 10px solid #8b8b8b; margin: auto 0 12px; }
.thumb { width: 13px; height: 122px; margin-top: 109px; border-radius: 7px; background: #8b8b8b; }
.window-right .thumb { height: 356px; margin-top: 12px; }

.sidebar { flex: 1; display: flex; flex-direction: column; align-items: center; padding: 3px 0 0; }
.window-right .sidebar { padding-left: 1px; }
.sidebar div { display: flex; align-items: center; justify-content: center; height: 60.250px; }
.sidebar .add { height: 70px; color: #222; }
.sidebar hr { width: 42px; height: 2px; margin: 206px 0 4px; border: 0; background: #bdbdbd; }

/* freeCodeCamp page */
.fcc { flex: 1; display: flex; flex-direction: column; align-items: center; background: #f5f6f7; font-family: Lato, sans-serif; color: #1b1b32; }
.fcc-nav { display: flex; align-items: center; width: 100%; height: 29px; flex: none; padding: 0 11px; background: #0a0a23; }
.fcc-search { display: flex; align-items: center; gap: 11px; width: 375px; height: 19px; padding-left: 5px; background: #3b3b4f; color: #d0d0d5; font-size: 13.600px; }
.fcc-logo { display: flex; align-items: center; margin-left: 46px; padding-bottom: 2px; font: 17.500px "Liberation Mono", monospace; color: #fff; }
.fcc-logo svg { margin-left: 3px; }
.fcc-actions { display: flex; align-items: center; gap: 7px; margin-left: auto; }
.fcc-btn { display: flex; align-items: center; justify-content: center; height: 23px; width: 28px; border: 1px solid #fff; color: #fff; font-size: 14px; }
.fcc-btn.menu { width: 58px; margin-right: 1px; }
.flash { display: flex; align-items: center; width: 100%; height: 27px; flex: none; padding: 0 167px 4px; border: 1px solid #d6e9c6; background: #dff0d8; color: #3c763d; font-size: 13.450px; }
.flash svg { margin: 4px 0 0 auto; color: #8fb58c; }
.column { display: flex; flex-direction: column; width: 563px; flex: 1; }
.prev-block { height: 24px; background: #fff; margin-bottom: 3px; }
.block-head { display: flex; align-items: center; height: 71px; padding: 0 12px 4px 11px; background: #fff; }
.block-head h3 { flex: 1; margin-left: 7px; font: bold 14.860px "DejaVu Sans Mono", monospace; }
.block-head svg { margin-top: 3px; }
.block-head svg:first-child { margin-top: 0; }
.block-body { margin-top: 1px; height: 697px; padding: 18px 19px 0; background: #fff; font-size: 15.520px; line-height: 21.200px; }
.block-body p { margin-bottom: 14.400px; }
.steps { display: grid; grid-template-columns: repeat(10, 46px); grid-auto-rows: 46px; column-gap: 7.250px; row-gap: 11.100px; margin-top: 22px; font-size: 15.200px; }
.steps a { display: flex; align-items: center; justify-content: center; border: 1px solid #0a0a23; background: #99c9ff; font-weight: 700; padding-bottom: 2px; }
.next-block { margin-top: 3px; flex: 1; background: #fff; }

/* GitHub page */
.gh { flex: 1; display: flex; flex-direction: column; background: #fff; }
.gh svg { fill: #57606a; }
.gh-header { height: 156px; flex: none; background: #f6f8fa; border-bottom: 2px solid #d8dfe6; }
.gh-top { display: flex; align-items: center; padding: 24px 23px 0 24px; height: 72px; }
.gh-btn { display: flex; align-items: center; justify-content: center; width: 48px; height: 48px; border: 1px solid #cfd7df; border-radius: 9px; margin-right: 12px; }
.gh-mark { margin-left: 12px; }
.gh-user { flex: 1; margin-left: 24px; font-size: 19.700px; font-weight: 600; color: #1f2328; }
.gh-ava, .big-ava { border-radius: 50%; box-shadow: 0 0 0 2px #d5d8db; }
.gh-ava { margin: 0 2px 0 1px; }
.gh-tabs { display: flex; height: 84px; padding: 0 24px; }
.gh-tab { display: flex; align-items: center; height: 84px; padding: 12px 12px 0 11px; font-size: 19.500px; margin-right: 12px; }
.gh-tab span { margin: 2px 0 0 12px; }
.gh-tab.on { font-weight: 600; width: 150px; box-shadow: inset 0 -3px #fd8c73; }
.gh-tab em { width: 30px; height: 29px; margin: 0 0 0 13px; border-radius: 15px; background: #e8ebf0; font: 600 16.500px/29px "Open Sans", sans-serif; text-align: center; }
.gh-tab:nth-child(3) { padding-left: 10px; }
.gh-tab:nth-child(3) span { margin-left: 11px; }
.gh-more { margin: 45px 12px 0 auto; }
.gh-profile { padding: 60px 24px 0; display: flex; flex-direction: column; }
.gh-id { display: flex; align-items: center; height: 108px; padding-left: 1px; margin-bottom: 37px; }
.gh-id h1 { margin: 1px 0 0 24px; font-size: 28px; font-weight: 300; color: #57606a; }
.status, .edit { display: flex; align-items: center; height: 48px; border: 1px solid #d0d7de; border-radius: 9px; color: #656d76; font-size: 17px; padding-left: 12px; }
.status { padding-bottom: 4px; }
.status span { margin: 2px 0 0 12px; }
.edit { margin-top: 12px; height: 47px; padding: 2px 0 0; justify-content: center; background: #f6f8fa; font-size: 19.800px; font-weight: 600; color: #24292f; }
.follow { display: flex; align-items: center; height: 30px; margin-top: 37px; font-size: 19.750px; color: #656d76; }
.follow span { margin-left: 4px; }
.follow b { font-weight: 600; color: #1f2328; }
.row-head { display: flex; align-items: center; height: 34px; margin-top: 87px; }
.row-head h2 { flex: 1; font-size: 22.450px; }
.row-head small { font-size: 17px; color: #656d76; }
.repo { display: flex; align-items: flex-start; justify-content: space-between; height: 117px; margin-top: 12px; padding: 25px 24px; border: 1px solid #d0d7de; border-radius: 9px; }
.repo a { font-size: 20.050px; line-height: 31px; font-weight: 600; color: #0969da; }
.public { height: 29px; width: 73px; border: 1px solid #d0d7de; border-radius: 15px; font-size: 16.900px; line-height: 27px; font-weight: 600; color: #656d76; text-align: center; }
.contrib { margin-top: 62px; }
.contrib h2 { font-size: 22.650px; }
.caret { width: 0; border: 6px solid transparent; border-bottom: 0; border-top-color: #57606a; margin: 4px 0 0 5px; }

/* shade cast by the neighbouring window */
.edge-shadow { position: absolute; left: 0; top: 0; width: 64px; height: 100%; background: linear-gradient(90deg, rgba(0,0,0,.2), rgba(0,0,0,.09) 25%, rgba(0,0,0,.03) 55%, transparent); }

.widget { position: absolute; left: 1850px; top: 783px; width: 59px; height: 60px; border: 4px solid #d3d4d8; border-radius: 11px; background: #afb1b7; display: flex; align-items: center; justify-content: center; }

/* taskbar */
.taskbar { display: flex; align-items: center; justify-content: space-between; height: 70px; padding: 0 30px 2px 31px; background: linear-gradient(90deg, #e9e8ee 6%, #dededf 9%, #dddddf 17%, #e9e9ee 23%, #ecebef 50%, #ebeaef 78%, #dcdcde 84%, #dedee0 88%, #ebeaee 95%); color: #1a1a1a; font-size: 17px; }
.weather { display: flex; align-items: center; gap: 9px; width: 379px; }
.weather div, .clock { display: flex; flex-direction: column; line-height: 24px; }
.sky { color: #555; }
.apps { display: flex; align-items: center; flex: 1; }
.start { margin-right: 20px; }
.search { display: flex; align-items: center; width: 329px; height: 48px; margin-right: 3px; padding: 0 6px 0 15px; border: 2px solid #dcdcdf; border-bottom-color: #c4c4c6; border-radius: 24px; background: #fafafa; font-size: 19px; color: #5a5a5a; }
.search span { flex: 1; margin-left: 14px; }
.app { position: relative; display: flex; align-items: center; justify-content: center; width: 66.100px; height: 58px; }
.current { margin: 0 5px; width: 56px; border: 2px solid #dcdbe0; border-radius: 7px; background: #f5f5f8; }
.run { position: absolute; left: 50%; bottom: -1px; width: 24px; height: 5px; margin-left: -12px; border-radius: 3px; background: #0a78d4; }
.idle { width: 9px; margin-left: -4px; bottom: 1px; background: #888; }
.count, .note { width: 24px; height: 24px; border-radius: 50%; background: #0078d4; color: #fff; font-size: 14.500px; line-height: 23px; font-weight: 400; text-align: center; }
.count { position: absolute; left: 35px; top: 3px; }
.tray { display: flex; align-items: center; }
.wifi { margin-left: 27px; }
.vol { margin-left: 12px; }
.bat { margin-left: 12px; }
.clock { width: 118px; align-items: flex-end; font-size: 17.400px; }
.note { margin-left: 11px; }
```
